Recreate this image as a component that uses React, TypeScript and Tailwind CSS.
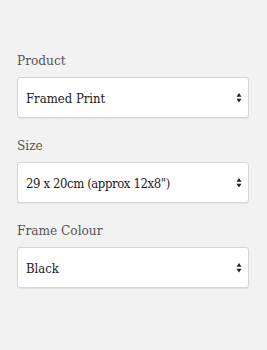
import React from "react";

const Arrows = () => (
  <svg width="6" height="11" viewBox="0 0 6 11" className="absolute right-[6px] top-1/2 -translate-y-1/2">
    <polygon points="3,0.5 5.5,4.2 0.5,4.2" fill="#222" />
    <polygon points="0.5,6.3 5.5,6.3 3,10" fill="#222" />
  </svg>
);

const Field = ({ label, value, tight }: { label: string; value: string; tight?: boolean }) => (
  <div className="flex flex-col">
    <div className="h-[20px] text-[13.5px] leading-[20px] text-[#555] mb-[7px]">{label}</div>
    <div className="relative h-[41px] rounded-[3px] border border-[#d6d6d6] bg-white shadow-[0_1px_1px_rgba(0,0,0,0.06)] flex items-center pl-[8px] pt-[2px]">
      <span className={tight ? "text-[13px] text-[#222] tracking-[-0.4px]" : "text-[13px] text-[#222]"}>{value}</span>
      <Arrows />
    </div>
  </div>
);

export default function App() {
  return (
    <div
      className="w-[267px] h-[350px] bg-[#f2f2f2] pt-[50px] pl-[17px] pr-[18px] flex flex-col gap-[17px]"
      style={{ fontFamily: '"DejaVu Serif Condensed", "DejaVu Serif", serif' }}
    >
      <Field label="Product" value="Framed Print" />
      <Field label="Size" value={'29 x 20cm (approx 12x8")'} tight />
      <Field label="Frame Colour" value="Black" />
    </div>
  );
}
